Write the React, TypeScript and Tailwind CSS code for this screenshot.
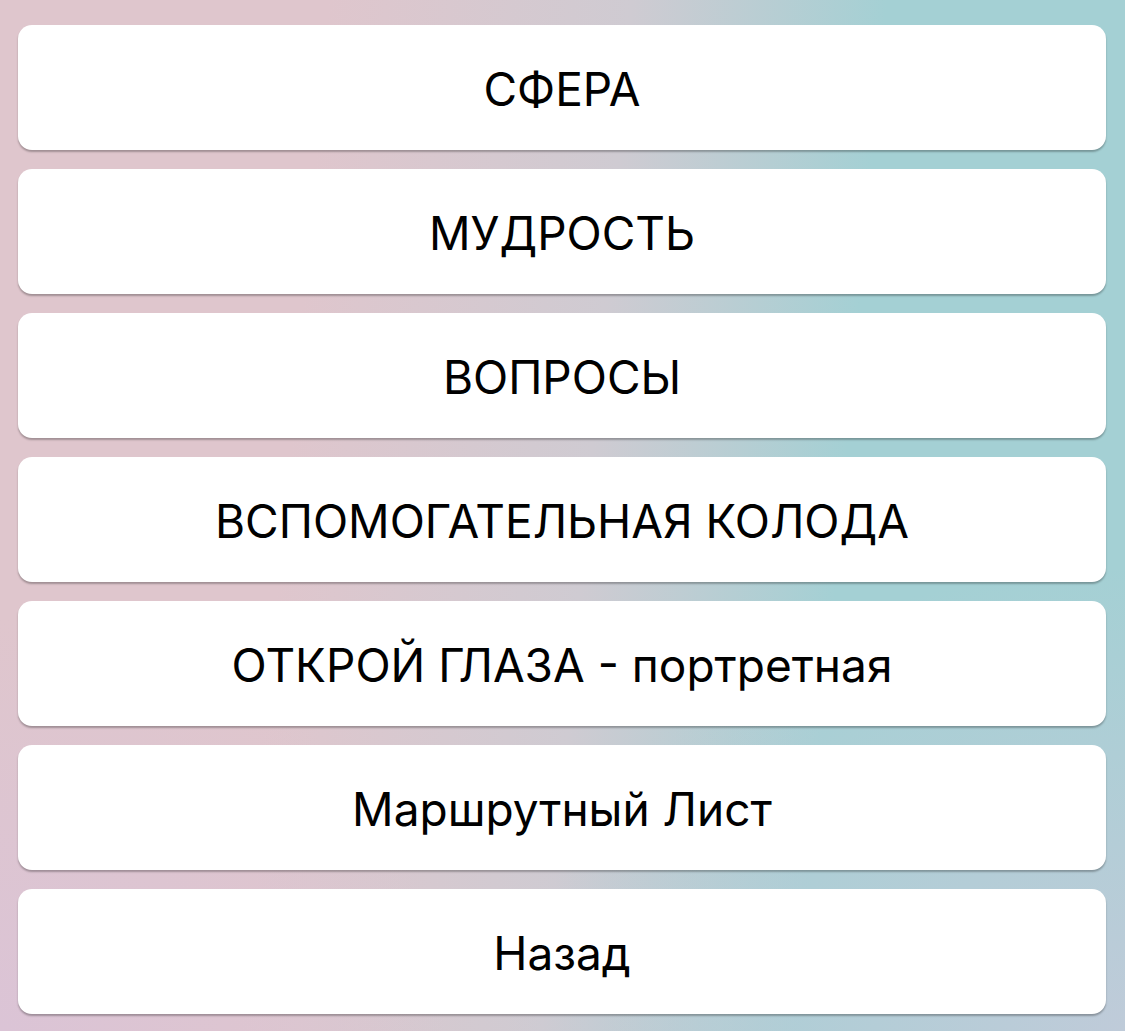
const items = [
  "СФЕРА",
  "МУДРОСТЬ",
  "ВОПРОСЫ",
  "ВСПОМОГАТЕЛЬНАЯ КОЛОДА",
  "ОТКРОЙ ГЛАЗА - портретная",
  "Маршрутный Лист",
  "Назад",
];

export default function App() {
  return (
    <div className="min-h-[1031px] w-[1125px] bg-[radial-gradient(ellipse_55%_45%_at_100%_100%,#bfcbd9,transparent),radial-gradient(ellipse_40%_40%_at_0%_100%,#dbc4d6,transparent),linear-gradient(95deg,#dfc6cd_27%,#cfcbd2_52%,#a4d0d4_73%)] px-[18px] pr-[19px] pt-[25px] pb-[17px] font-['Inter','Roboto',sans-serif]">
      {/* Menu */}
      <div className="flex flex-col gap-[19px]">
        {items.map((label) => (
          <button
            key={label}
            className="flex h-[125px] w-full items-center justify-center rounded-[14px] bg-white pt-[2px] text-[46px] leading-none text-black shadow-[0_2px_2px_rgba(0,0,0,0.28)]"
          >
            {label}
          </button>
        ))}
      </div>
    </div>
  );
}
